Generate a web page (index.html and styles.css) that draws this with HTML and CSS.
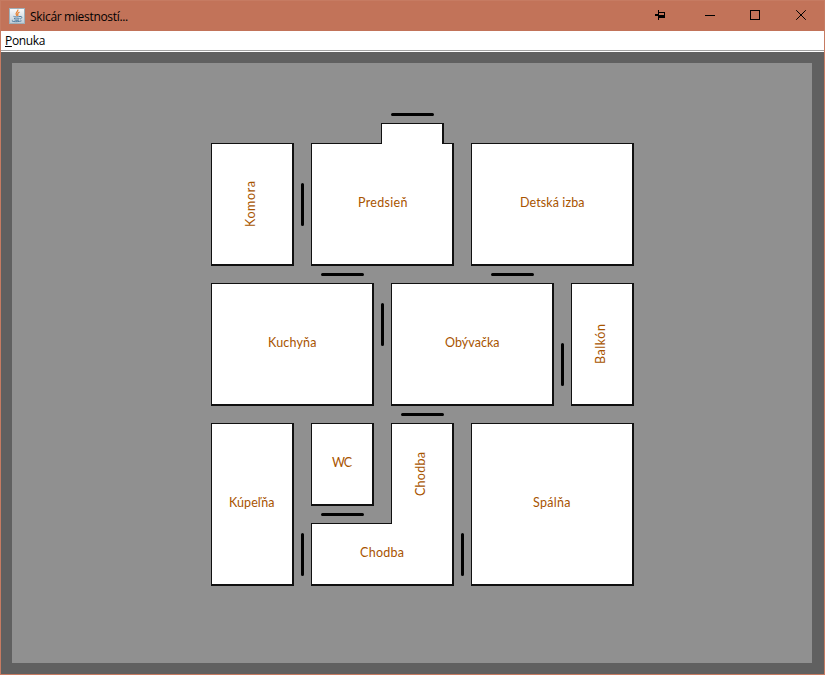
FILE: index.html
```html
<!DOCTYPE html>
<html lang="sk">
<head>
<meta charset="utf-8">
<title>Skicár miestností...</title>
<link rel="stylesheet" href="styles.css">
</head>
<body>
<div class="window">
  <header class="titlebar">
    <svg class="app-icon" width="16" height="16" viewBox="0 0 16 16">
      <defs><linearGradient id="tile" x2="0" y2="1"><stop stop-color="#fbfcfd"/><stop offset="1" stop-color="#bccbd6"/></linearGradient></defs>
      <rect x=".5" y=".5" width="15" height="15" fill="url(#tile)" stroke="#9eafb9"/>
      <path d="M8.8 1.5c1 2-3 3-1.5 5.2l.8 1.1M10.5 4c-2 1-2.4 2-1.2 3.7" fill="none" stroke="#e77f2e" stroke-width="1.2"/>
      <path d="M4.5 8.4c1 .8 4.500.7 6.500 0M5 10.400c1.500.7 4 .7 5.500 0M5.500 12c1.500.6 3 .6 4.500 0M11 8.500c2.500-.6 2.300 1.900.2 2.500M3.500 12.200c-2.500 1.700 6 2 9 .6" fill="none" stroke="#527c9e"/>
    </svg>
    <span class="title">Skicár miestností...</span>
    <svg class="controls" width="165" height="31" viewBox="0 0 165 31" shape-rendering="crispEdges">
      <path d="M0 14h3v2H0zM3 10h1v10H3zM4 12h6v6H4z"/>
      <path class="pin-gap" d="M4 13h5v2H4z"/>
      <path d="M50 15h10v1H50z"/>
      <path d="M95.500 10.500h9v9h-9z" fill="none" stroke="#000"/>
      <path d="M141.200 10.200l9.600 9.600M150.800 10.200l-9.600 9.600" stroke="#000" shape-rendering="auto"/>
    </svg>
  </header>
  <nav class="menubar"><span class="menu"><u>P</u>onuka</span></nav>
  <main class="workspace">
    <svg class="plan" width="800" height="600" viewBox="12 63 800 600">
      <g class="room" shape-rendering="crispEdges">
        <path d="M211 143h83v123h-83z"/>
        <path d="M311 143h70v-20h63v20h10v123H311z"/>
        <path d="M471 143h163v123H471z"/>
        <path d="M211 283h163v123H211z"/>
        <path d="M391 283h163v123H391z"/>
        <path d="M571 283h63v123h-63z"/>
        <path d="M211 423h83v163h-83z"/>
        <path d="M311 423h63v83h-63z"/>
        <path d="M391 423h63v163H311v-63h80z"/>
        <path d="M471 423h163v163H471z"/>
      </g>
      <g class="floor" shape-rendering="crispEdges">
        <path d="M212 144h80v120h-80z"/>
        <path d="M312 144h70v-20h60v20h10v120H312z"/>
        <path d="M472 144h160v120H472z"/>
        <path d="M212 284h160v120H212z"/>
        <path d="M392 284h160v120H392z"/>
        <path d="M572 284h60v120h-60z"/>
        <path d="M212 424h80v160h-80z"/>
        <path d="M312 424h60v80h-60z"/>
        <path d="M392 424h60v160H312v-60h80z"/>
        <path d="M472 424h160v160H472z"/>
      </g>
      <path class="door" d="M392.500 114.500h40M322.500 274.500h40M492.500 274.500h40M402.500 414.500h40M322.500 514.500h40M302.500 184.500v40M382.500 304.500v40M562.500 344.500v40M302.500 534.500v40M462.500 534.500v40"/>
      <g class="label">
        <text x="358" y="207" textLength="49.500">Predsieň</text>
        <text x="520" y="207" textLength="64.500">Detská izba</text>
        <text x="268" y="347" textLength="48.500">Kuchyňa</text>
        <text x="445" y="347" textLength="54.500">Obývačka</text>
        <text x="332" y="467" textLength="20">WC</text>
        <text x="229" y="507" textLength="45.500">Kúpeľňa</text>
        <text x="533" y="507" textLength="37.500">Spálňa</text>
        <text x="360" y="557" textLength="44">Chodba</text>
        <text transform="translate(255 227)rotate(-90)" textLength="46">Komora</text>
        <text transform="translate(605 364)rotate(-90)" textLength="40">Balkón</text>
        <text transform="translate(425 496)rotate(-90)" textLength="44">Chodba</text>
      </g>
    </svg>
  </main>
</div>
</body>
</html>
```
FILE: styles.css
```css
* { box-sizing: border-box; }
body { margin: 0; overflow: hidden; font-family: "Open Sans", "Noto Sans", sans-serif; font-size: 12px; color: #000; }
.window { width: 825px; height: 675px; display: flex; flex-direction: column; border: 1px solid #c67b62; border-top: 0; }
.titlebar { height: 31px; display: flex; align-items: center; padding-left: 8px; background: #c27359; border-top: 1px solid #c67b62; }
.app-icon { margin-right: 5px; }
.title { letter-spacing: -0.32px; line-height: 30px; padding-top: 1px; }
.controls { margin: -1px 4px 0 auto; }
.pin-gap { fill: #c27359; }
.menubar { height: 21px; padding-left: 4px; line-height: 20px; background: linear-gradient(#fff 19px, #a0a0a0 19px, #a0a0a0 20px, #fff 20px); }
.menu { letter-spacing: -0.35px; }
.workspace { flex: 1; padding: 11px; background: #606060; }
.plan { display: block; background: #909090; }
.room { fill: #101010; }
.floor { fill: #fff; }
.door { fill: none; stroke: #000; stroke-width: 3px; stroke-linecap: round; }
.label { fill: #a85400; font-family: Lato, "Open Sans", sans-serif; font-size: 12.5px; }
```
